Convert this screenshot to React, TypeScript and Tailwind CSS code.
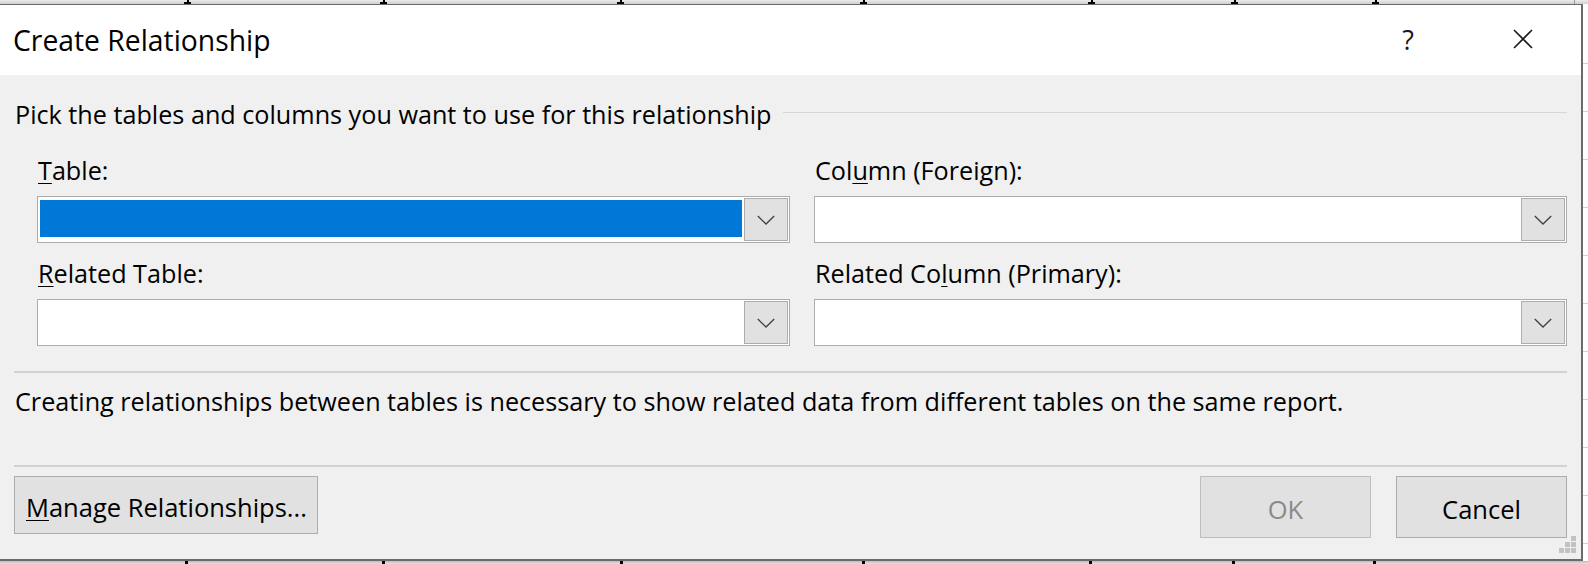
import React from 'react';

const TOP_MARKS = [187, 383, 620, 863, 1091, 1234, 1375];
const BOTTOM_MARKS = [185, 382, 620, 862, 1089, 1232, 1373];

const Chevron: React.FC = () => (
    <svg width="18" height="10" viewBox="0 0 18 10" fill="none">
        <polyline points="0.8,1 9,9 17.2,1" stroke="#404040" strokeWidth="1.3" />
    </svg>
);

const Combo: React.FC<{ selected?: boolean }> = ({ selected }) => (
    <div className="flex h-[47px] border border-[#acacac] bg-white p-[1px]">
        <div className="flex-1 pl-[1px] pr-[2px] pt-[2px]">
            {selected && <div className="h-[37px] bg-[#0078d7]" />}
        </div>
        <div className="flex w-[44px] items-center justify-center border border-[#adadad] bg-[#e1e1e1]">
            <Chevron />
        </div>
    </div>
);

const Label: React.FC<{ before?: string; u: string; after: string }> = ({ before, u, after }) => (
    <div className="pl-[1px] text-[25.2px] leading-[34px]">
        {before}
        <span className="underline decoration-1 underline-offset-[3px]">{u}</span>
        {after}
    </div>
);

export default function App() {
    return (
        <div className="flex h-[564px] w-[1588px] flex-col overflow-hidden bg-white font-['Open_Sans',sans-serif] text-black">
            {/* spreadsheet behind the dialog */}
            <div className="relative h-[4px] shrink-0 bg-gradient-to-b from-[#ececec] to-[#cfcfcf]">
                {TOP_MARKS.map((x) => (
                    <span key={x} className="absolute bottom-0 flex w-[7px] flex-col items-center" style={{ left: x - 3 }}>
                        <span className="h-[2px] w-[2px] bg-black" />
                        <span className="h-[2px] w-[7px] bg-black" />
                    </span>
                ))}
                <span className="absolute left-[1574px] top-0 h-[4px] w-[1px] bg-[#9a9a9a]" />
            </div>

            <div className="flex h-[557px] shrink-0">
                {/* Dialog */}
                <div className="relative flex w-[1583px] shrink-0 flex-col border-t border-r-2 border-b-2 border-[#6a6a6a] bg-[#f0f0f0]">
                    {/* Title bar */}
                    <div className="flex h-[70px] shrink-0 items-center bg-white pl-[13px] pr-[38px]">
                        <div className="text-[28.3px] leading-[36px]">Create Relationship</div>
                        <div className="ml-auto flex items-center gap-[75px]">
                            <span className="w-[40px] text-center text-[27px] leading-[36px] text-[#1a1a1a]">?</span>
                            <div className="flex h-[40px] w-[40px] items-center justify-center pb-[3px]">
                                <svg width="20" height="20" viewBox="0 0 20 20">
                                    <path d="M1 1 L19 19 M19 1 L1 19" stroke="#1a1a1a" strokeWidth="1.6" />
                                </svg>
                            </div>
                        </div>
                    </div>

                    {/* Body */}
                    <div className="flex flex-1 flex-col px-[14px]">
                        <div className="mt-[22px] flex items-start">
                            <div className="pl-[1px] text-[25.2px] leading-[34px]">
                                Pick the tables and columns you want to use for this relationship
                            </div>
                            <div className="ml-[12px] mt-[15px] h-[1px] flex-1 bg-[#d7d7d7]" />
                        </div>

                        <div className="ml-[23px] mt-[22px] grid grid-cols-2 gap-x-[24px]">
                            <div>
                                <Label u="T" after="able:" />
                                <div className="mt-[9px]"><Combo selected /></div>
                                <div className="mt-[13px]"><Label u="R" after="elated Table:" /></div>
                                <div className="mt-[9px]"><Combo /></div>
                            </div>
                            <div>
                                <Label before="Col" u="u" after="mn (Foreign):" />
                                <div className="mt-[9px]"><Combo /></div>
                                <div className="mt-[13px]"><Label before="Related Co" u="l" after="umn (Primary):" /></div>
                                <div className="mt-[9px]"><Combo /></div>
                            </div>
                        </div>

                        <div className="mt-[25px] h-[2px] bg-[#d2d2d2]" />

                        <div className="mt-[11px] pl-[1px] text-[25.2px] leading-[34px]">
                            Creating relationships between tables is necessary to show related data from different tables on the same report.
                        </div>

                        <div className="mt-[47px] h-[2px] bg-[#d2d2d2]" />

                        <div className="mt-[9px] flex items-start">
                            <button className="flex h-[58px] w-[304px] items-center border border-[#adadad] bg-[#e1e1e1] pl-[11px] pt-[4px] text-left text-[25.5px] leading-[34px]">
                                <span>
                                    <span className="underline decoration-1 underline-offset-[3px]">M</span>anage Relationships...
                                </span>
                            </button>
                            <div className="ml-auto flex gap-[25px]">
                                <button className="flex h-[62px] w-[171px] items-center justify-center border border-[#bdbdbd] bg-[#e1e1e1] pt-[4px] text-[25.5px] leading-[34px] text-[#8a8a8a]">
                                    OK
                                </button>
                                <button className="flex h-[62px] w-[171px] items-center justify-center border border-[#adadad] bg-[#e1e1e1] pt-[4px] text-[25.5px] leading-[34px]">
                                    Cancel
                                </button>
                            </div>
                        </div>
                    </div>

                    {/* resize grip */}
                    <div className="absolute bottom-[6px] right-[5px] grid grid-cols-3 gap-[1px]">
                        <span className="h-[5px] w-[5px]" />
                        <span className="h-[5px] w-[5px]" />
                        <span className="h-[5px] w-[5px] bg-[#c2c2c2]" />
                        <span className="h-[5px] w-[5px]" />
                        <span className="h-[5px] w-[5px] bg-[#c2c2c2]" />
                        <span className="h-[5px] w-[5px] bg-[#c2c2c2]" />
                        <span className="h-[5px] w-[5px] bg-[#c2c2c2]" />
                        <span className="h-[5px] w-[5px] bg-[#c2c2c2]" />
                        <span className="h-[5px] w-[5px] bg-[#c2c2c2]" />
                    </div>
                </div>

                {/* grid lines to the right */}
                <div className="flex flex-1 flex-col bg-white pt-[59px]">
                    {Array.from({ length: 11 }).map((_, i) => (
                        <div key={i} className="h-[48px] shrink-0 border-t border-[#d4d4d4]" />
                    ))}
                </div>
            </div>

            <div className="relative h-[3px] shrink-0 bg-gradient-to-b from-[#bdbdbd] to-[#e2e2e2]">
                {BOTTOM_MARKS.map((x) => (
                    <span key={x} className="absolute top-0 h-[3px] w-[3px] bg-black" style={{ left: x }} />
                ))}
            </div>
        </div>
    );
}
